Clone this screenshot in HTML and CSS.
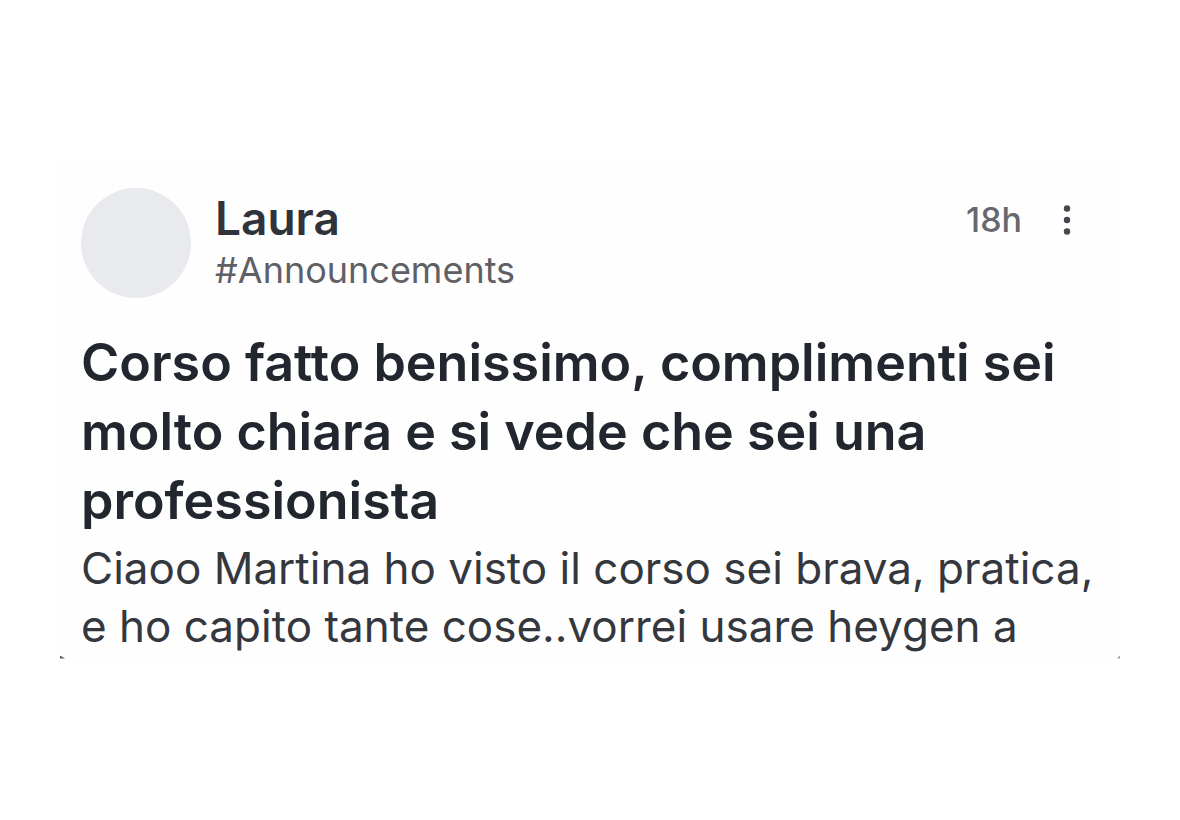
FILE: index.html
```html
<!DOCTYPE html>
<html lang="it">
<head>
  <meta charset="UTF-8">
  <meta name="viewport" content="width=device-width, initial-scale=1.0">
  <title>Laura - #Announcements</title>
  <link rel="stylesheet" href="styles.css">
</head>
<body>

<article class="post">
  <header class="post-header">
    <div class="avatar"></div>
    <div class="author">
      <p class="name">Laura</p>
      <a class="channel" href="#">#Announcements</a>
    </div>
    <div class="meta">
      <time>18h</time>
      <button class="menu" type="button" aria-label="Altre opzioni">
        <svg width="10" height="30" viewBox="0 0 10 30" fill="currentColor">
          <circle cx="5" cy="3.5" r="3.2"/>
          <circle cx="5" cy="15" r="3.2"/>
          <circle cx="5" cy="26.5" r="3.2"/>
        </svg>
      </button>
    </div>
  </header>
  <h1>Corso fatto benissimo, complimenti sei molto chiara e si vede che sei una professionista</h1>
  <p class="text">Ciaoo Martina ho visto il corso sei brava, pratica, e ho capito tante cose..vorrei usare heygen a</p>
</article>

</body>
</html>
```
FILE: styles.css
```css
body {
  font-family: Inter, "Liberation Sans", sans-serif;
  margin: 0;
  min-height: 100vh;
  display: flex;
  align-items: center;
  background-color: #fff;
}
.post {
  position: relative;
  flex: 1;
  margin: 0 60px;
  padding: 26px 20px 4px 21px;
  background-color: #fefefe;
}
/* dark tips in the bottom corners */
.post::before, .post::after {
  content: "";
  position: absolute;
  bottom: 0;
  width: 5px;
  height: 3px;
  background-color: #55585a;
}
.post::before {
  left: 0;
  clip-path: polygon(0 0, 100% 100%, 0 100%);
}
.post::after {
  right: 0;
  width: 3px;
  background-color: #999;
  clip-path: polygon(100% 0, 100% 100%, 0 100%);
}
.post-header {
  display: flex;
  align-items: flex-start;
  margin-bottom: 30px;
}
.avatar {
  width: 110px;
  height: 110px;
  border-radius: 50%;
  background-color: #e9eaee;
}
.author {
  margin-left: 24px;
  padding-top: 4px;
}
.name {
  margin: 0;
  font-size: 46px;
  line-height: 52px;
  font-weight: 600;
  color: #30333b;
}
.channel {
  display: block;
  font-size: 36px;
  line-height: 52px;
  color: #5e6066;
  text-decoration: none;
}
.meta {
  display: flex;
  align-items: center;
  gap: 40px;
  margin-left: auto;
  padding: 12px 28px 0 0;
  font-size: 34px;
  line-height: 40px;
  font-weight: 500;
  color: #66686e;
}
.menu {
  display: flex;
  padding: 0;
  border: none;
  background: none;
  color: #44474e;
  cursor: pointer;
}
h1 {
  margin: 0;
  font-size: 52px;
  line-height: 69px;
  font-weight: 600;
  color: #22262f;
}
.text {
  margin: 4px 0 0;
  font-size: 44px;
  line-height: 58px;
  color: #34373d;
}
```
